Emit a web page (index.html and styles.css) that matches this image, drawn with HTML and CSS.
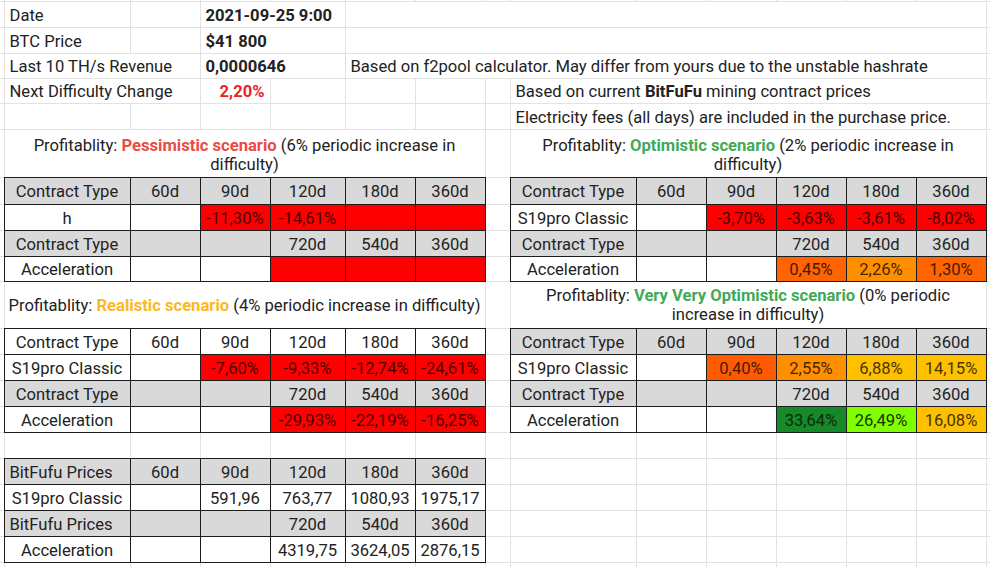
FILE: index.html
```html
<!DOCTYPE html>
<html lang="en">
<head>
<meta charset="utf-8">
<title>BitFuFu profitability</title>
<link rel="stylesheet" href="styles.css">
</head>
<body>
<table class="sheet">
  <colgroup>
    <col class="w4"><col class="w126"><col class="w70"><col class="w70"><col class="w75"><col class="w70"><col class="w70"><col class="w25">
    <col class="w126"><col class="w70"><col class="w70"><col class="w70"><col class="w70"><col class="w70"><col class="w4">
  </colgroup>
  <tbody>
    <tr class="r1"><td></td><td></td><td></td><td></td><td></td><td></td><td></td><td></td><td></td><td></td><td></td><td></td><td></td><td></td><td></td></tr>
    <tr class="r26"><td></td><td>Date</td><td></td><td colspan="2" class="b">2021-09-25 9:00</td><td colspan="9"></td><td></td></tr>
    <tr class="r26"><td></td><td>BTC Price</td><td></td><td colspan="2" class="b">$41 800</td><td colspan="9"></td><td></td></tr>
    <tr class="r25"><td></td><td colspan="2">Last 10 TH/s Revenue</td><td colspan="2" class="b">0,0000646</td><td colspan="9">Based on f2pool calculator. May differ from yours due to the unstable hashrate</td><td></td></tr>
    <tr class="r25"><td></td><td colspan="2">Next Difficulty Change</td><td class="b rt red-t">2,20%</td><td></td><td></td><td></td><td></td><td colspan="6">Based on current <b>BitFuFu</b> mining contract prices</td><td></td></tr>
    <tr class="r26"><td></td><td></td><td></td><td></td><td></td><td></td><td></td><td></td><td colspan="6">Electricity fees (all days) are included in the purchase price.</td><td></td></tr>

    <tr class="r48"><td></td>
      <td colspan="6" class="title">Profitablity: <b class="pess">Pessimistic scenario</b> (6% periodic increase in difficulty)</td>
      <td></td>
      <td colspan="6" class="title">Profitablity: <b class="opt">Optimistic scenario</b> (2% periodic increase in difficulty)</td>
      <td></td></tr>
    <tr class="r27"><td></td>
      <td class="k g">Contract Type</td><td class="k g">60d</td><td class="k g">90d</td><td class="k g">120d</td><td class="k g">180d</td><td class="k g">360d</td>
      <td></td>
      <td class="k g">Contract Type</td><td class="k g">60d</td><td class="k g">90d</td><td class="k g">120d</td><td class="k g">180d</td><td class="k g">360d</td>
      <td></td></tr>
    <tr class="r26"><td></td>
      <td class="k">h</td><td class="k"></td><td class="k red">-11,30%</td><td class="k red">-14,61%</td><td class="k red"></td><td class="k red"></td>
      <td></td>
      <td class="k">S19pro Classic</td><td class="k"></td><td class="k red">-3,70%</td><td class="k red">-3,63%</td><td class="k red">-3,61%</td><td class="k red">-8,02%</td>
      <td></td></tr>
    <tr class="r26"><td></td>
      <td class="k g">Contract Type</td><td class="k g"></td><td class="k g"></td><td class="k g">720d</td><td class="k g">540d</td><td class="k g">360d</td>
      <td></td>
      <td class="k g">Contract Type</td><td class="k g"></td><td class="k g"></td><td class="k g">720d</td><td class="k g">540d</td><td class="k g">360d</td>
      <td></td></tr>
    <tr class="r25"><td></td>
      <td class="k">Acceleration</td><td class="k"></td><td class="k"></td><td class="k red"></td><td class="k red"></td><td class="k red"></td>
      <td></td>
      <td class="k">Acceleration</td><td class="k"></td><td class="k"></td><td class="k or1">0,45%</td><td class="k or2">2,26%</td><td class="k or1">1,30%</td>
      <td></td></tr>

    <tr class="r47"><td></td>
      <td colspan="6" class="title wide">Profitablity: <b class="real">Realistic scenario</b> (4% periodic increase in difficulty)</td>
      <td></td>
      <td colspan="6" class="title narrow">Profitablity: <b class="opt">Very Very Optimistic scenario</b> (0% periodic increase in difficulty)</td>
      <td></td></tr>
    <tr class="r26"><td></td>
      <td class="k">Contract Type</td><td class="k">60d</td><td class="k">90d</td><td class="k">120d</td><td class="k">180d</td><td class="k">360d</td>
      <td></td>
      <td class="k g">Contract Type</td><td class="k g">60d</td><td class="k g">90d</td><td class="k g">120d</td><td class="k g">180d</td><td class="k g">360d</td>
      <td></td></tr>
    <tr class="r26"><td></td>
      <td class="k">S19pro Classic</td><td class="k"></td><td class="k red">-7,60%</td><td class="k red">-9,33%</td><td class="k red">-12,74%</td><td class="k red">-24,61%</td>
      <td></td>
      <td class="k">S19pro Classic</td><td class="k"></td><td class="k or0">0,40%</td><td class="k or2">2,55%</td><td class="k yl">6,88%</td><td class="k yl">14,15%</td>
      <td></td></tr>
    <tr class="r26"><td></td>
      <td class="k g">Contract Type</td><td class="k g"></td><td class="k g"></td><td class="k g">720d</td><td class="k g">540d</td><td class="k g">360d</td>
      <td></td>
      <td class="k g">Contract Type</td><td class="k g"></td><td class="k g"></td><td class="k g">720d</td><td class="k g">540d</td><td class="k g">360d</td>
      <td></td></tr>
    <tr class="r26"><td></td>
      <td class="k">Acceleration</td><td class="k"></td><td class="k"></td><td class="k red">-29,93%</td><td class="k red">-22,19%</td><td class="k red">-16,25%</td>
      <td></td>
      <td class="k">Acceleration</td><td class="k"></td><td class="k"></td><td class="k dg">33,64%</td><td class="k lg">26,49%</td><td class="k yl">16,08%</td>
      <td></td></tr>

    <tr class="r26"><td></td><td></td><td></td><td></td><td></td><td></td><td></td><td></td><td></td><td></td><td></td><td></td><td></td><td></td><td></td></tr>
    <tr class="r26"><td></td>
      <td class="k g lt">BitFufu Prices</td><td class="k g">60d</td><td class="k g">90d</td><td class="k g">120d</td><td class="k g">180d</td><td class="k g">360d</td>
      <td></td><td></td><td></td><td></td><td></td><td></td><td></td><td></td></tr>
    <tr class="r26"><td></td>
      <td class="k">S19pro Classic</td><td class="k"></td><td class="k">591,96</td><td class="k">763,77</td><td class="k">1080,93</td><td class="k">1975,17</td>
      <td></td><td></td><td></td><td></td><td></td><td></td><td></td><td></td></tr>
    <tr class="r26"><td></td>
      <td class="k g lt">BitFufu Prices</td><td class="k g"></td><td class="k g"></td><td class="k g">720d</td><td class="k g">540d</td><td class="k g">360d</td>
      <td></td><td></td><td></td><td></td><td></td><td></td><td></td><td></td></tr>
    <tr class="r26"><td></td>
      <td class="k">Acceleration</td><td class="k"></td><td class="k"></td><td class="k">4319,75</td><td class="k">3624,05</td><td class="k">2876,15</td>
      <td></td><td></td><td></td><td></td><td></td><td></td><td></td><td></td></tr>
    <tr class="r5"><td></td><td></td><td></td><td></td><td></td><td></td><td></td><td></td><td></td><td></td><td></td><td></td><td></td><td></td><td></td></tr>
  </tbody>
</table>
</body>
</html>
```
FILE: styles.css
```css
* { box-sizing: border-box; }
html, body { margin: 0; padding: 0; background: #fff; }
body {
  font-family: Roboto, "Liberation Sans", Arial, sans-serif;
  font-size: 16.6px;
  color: #222;
  overflow: hidden;
}
.sheet {
  border-collapse: collapse;
  table-layout: fixed;
  width: 990px;
}
.w4 { width: 4px; }
.w25 { width: 25px; }
.w70 { width: 70px; }
.w75 { width: 75px; }
.w126 { width: 126px; }

.r1 { height: 1px; }
.r5 { height: 5px; }
.r25 { height: 25px; }
.r26 { height: 26px; }
.r27 { height: 27px; }
.r47 { height: 47px; }
.r48 { height: 48px; }

.sheet td {
  padding: 1px 5px 0;
  border: none;
  border-right: 1px solid #e2e2e2;
  border-bottom: 1px solid #e2e2e2;
  white-space: nowrap;
  overflow: hidden;
  vertical-align: middle;
  line-height: 19px;
}
.sheet td.b { font-weight: bold; }
.sheet td.rt { text-align: right; }
.red-t { color: #e8242b; }

.sheet td.title {
  white-space: normal;
  text-align: center;
  padding: 2px 6px 0;
}
.sheet td.title.wide { padding: 0 2px; }
.sheet td.title.narrow { padding: 0 14px; }
.pess { color: #ea4a45; }
.opt { color: #42a957; }
.real { color: #f9b925; }

.sheet td.k {
  border: 1px double #1c1c1c;
  text-align: center;
  padding: 1px 2px 0;
}
.sheet td.lt { text-align: left; padding-left: 5px; }
.g { background: #d9d9d9; }
.red { background: #ff0000; color: #4d0000; }
.or0 { background: #ff5a00; color: #4a1a00; }
.or1 { background: #ff6400; color: #4a1a00; }
.or2 { background: #ff8f00; color: #4a2500; }
.yl { background: #ffc000; color: #4a3500; }
.dg { background: #168a28; color: #0a2a0a; }
.lg { background: #7fff00; color: #1a3300; }
```
